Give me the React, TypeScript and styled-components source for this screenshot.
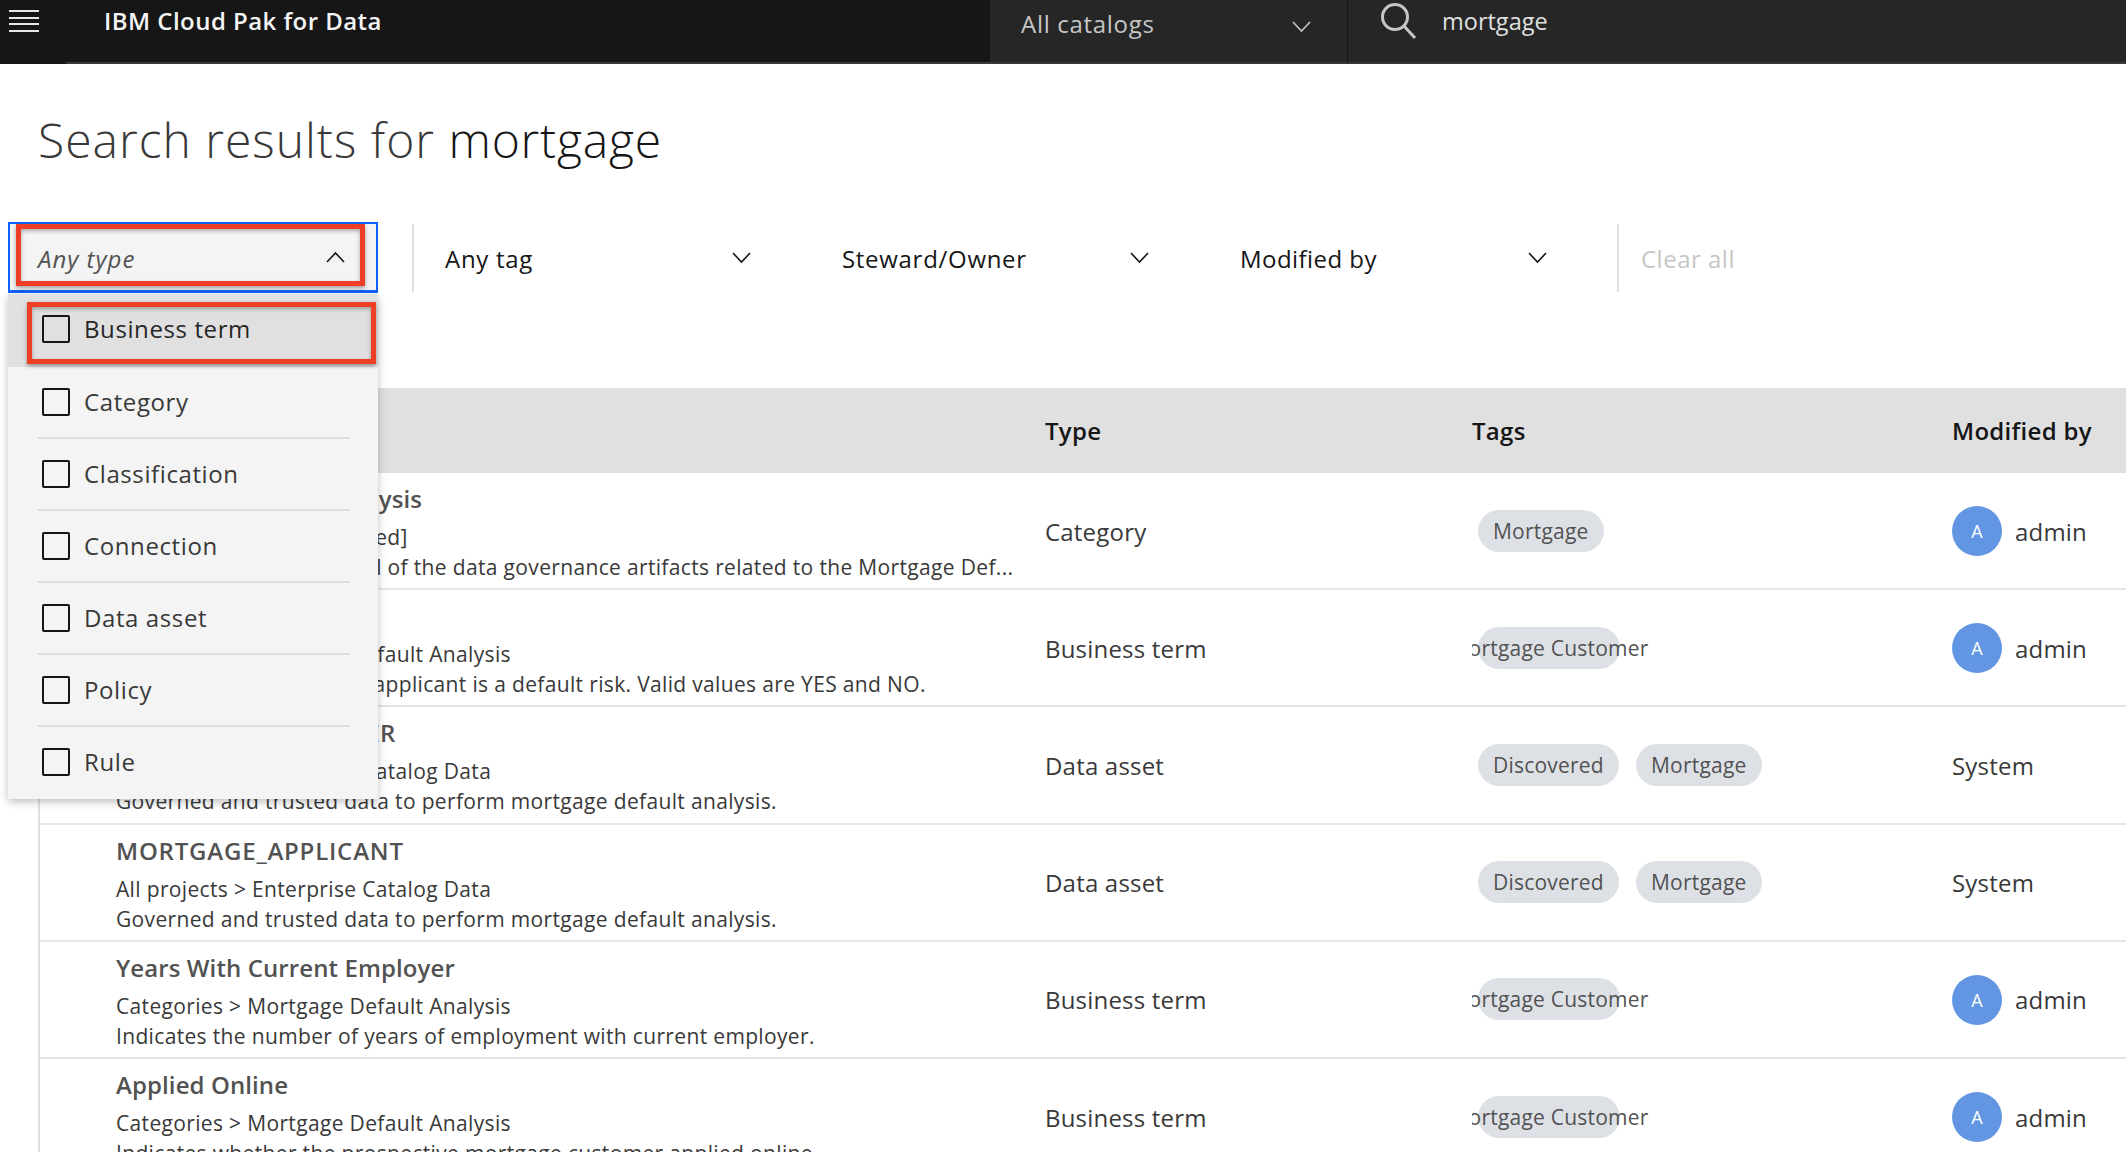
import React from "react";
import styled, { createGlobalStyle } from "styled-components";

const font = `"Open Sans", "Noto Sans", sans-serif`;

const Global = createGlobalStyle`
  html, body { margin: 0; padding: 0; background: #fff; }
  body { width: 2126px; height: 1152px; overflow: hidden; font-family: ${font}; }
  * { box-sizing: border-box; }
`;

const Page = styled.div`
  position: relative;
  width: 2126px;
  height: 1152px;
  overflow: hidden;
`;

const TopBar = styled.header`
  display: flex;
  height: 64px;
  background: #161616;
  color: #fff;
`;

const Burger = styled.div`
  width: 66px;
  padding: 10px 0 0 9px;
  display: flex;
  flex-direction: column;
  gap: 4.5px;
  flex: none;
  span { display: block; width: 30px; height: 2px; background: #e8e8e8; }
`;

const Brand = styled.div`
  width: 924px;
  flex: none;
  height: 64px;
  padding: 4px 0 0 38px;
  font-size: 24px;
  line-height: 34px;
  font-weight: 600;
  letter-spacing: 0.45px;
  color: #f4f4f4;
  border-bottom: 2px solid #393939;
`;

const Catalogs = styled.div`
  width: 358px;
  flex: none;
  display: flex;
  align-items: flex-start;
  justify-content: space-between;
  background: #262626;
  border-right: 1px solid #161616;
  border-bottom: 2px solid #393939;
  padding: 7px 36px 0 31px;
  font-size: 24px;
  line-height: 34px;
  letter-spacing: 0.7px;
  color: #c6c6c6;
  svg { margin-top: 14px; }
`;

const SearchBox = styled.div`
  flex: 1;
  display: flex;
  align-items: flex-start;
  gap: 25px;
  background: #262626;
  border-bottom: 2px solid #393939;
  padding: 2px 0 0 32px;
  font-size: 23.5px;
  line-height: 36px;
  color: #e0e0e0;
  span { margin-top: 1px; }
`;

const Title = styled.h1`
  margin: 0;
  padding: 43px 0 0 38px;
  height: 158px;
  font-size: 48px;
  line-height: 66px;
  font-weight: 300;
  letter-spacing: 1px;
  color: #393939;
  b { font-weight: 350; color: #161616; letter-spacing: 0.8px; }
`;

const FilterBar = styled.div`
  display: flex;
  align-items: center;
  height: 71px;
  padding-left: 8px;
  font-size: 24px;
  letter-spacing: 0.7px;
`;

const ActiveFilter = styled.div`
  width: 370px;
  height: 71px;
  flex: none;
  display: flex;
  align-items: center;
  justify-content: space-between;
  padding: 2px 31px 0 28px;
  background: #f4f4f4;
  border: 2px solid #0f62fe;
  border-bottom-width: 3px;
  font-style: italic;
  letter-spacing: 1px;
  color: #525252;
  svg { margin-top: -2px; }
`;

const Divider = styled.div<{ $gap: number }>`
  width: 2px;
  height: 68px;
  flex: none;
  background: #e0e0e0;
  margin-left: ${(p) => p.$gap}px;
`;

const Filter = styled.div<{ $first?: boolean }>`
  width: ${(p) => (p.$first ? 397 : 398)}px;
  flex: none;
  display: flex;
  align-items: center;
  margin-left: ${(p) => (p.$first ? 31 : 0)}px;
  padding-top: 1px;
  font-weight: 500;
  color: #161616;
  span { width: ${(p) => (p.$first ? 287 : 288)}px; }
`;

const LastFilter = styled(Filter)`
  width: 377px;
  letter-spacing: 0.45px;
`;

const ClearAll = styled.div`
  margin-left: 22px;
  padding-top: 1px;
  letter-spacing: 0.5px;
  color: #c6c6c6;
`;

const Table = styled.div`
  margin: 95px 0 0 38px;
  border-left: 2px solid #e0e0e0;
`;

const HeadRow = styled.div`
  display: grid;
  grid-template-columns: 1005px 427px 480px 1fr;
  align-items: center;
  height: 85px;
  background: #e0e0e0;
  font-size: 24px;
  letter-spacing: 0.3px;
  font-weight: 600;
  color: #161616;
`;

const Row = styled.div`
  display: grid;
  grid-template-columns: 1005px 427px 480px 1fr;
  align-items: center;
  height: 117.2px;
  border-bottom: 2px solid #e6e6e6;
  padding-top: 1px;
  font-size: 24px;
  letter-spacing: 0.2px;
  color: #393939;
`;

const NameCell = styled.div`
  padding: 4px 0 0 76px;
  white-space: nowrap;
  overflow: hidden;
  letter-spacing: 0;
`;

const RowTitle = styled.div<{ $spacing: number }>`
  font-size: 24px;
  line-height: 30px;
  font-weight: 600;
  color: #525252;
  margin-bottom: 8px;
  letter-spacing: ${(p) => p.$spacing}px;
`;

const RowLine = styled.div`
  font-size: 21px;
  line-height: 30px;
  letter-spacing: 0.34px;
  color: #393939;
`;

const TagCell = styled.div`
  display: flex;
  gap: 17px;
  overflow: hidden;
  padding-left: 6px;
  margin-top: -1px;
  letter-spacing: 0.22px;
`;

const Tag = styled.div<{ $w?: number }>`
  display: flex;
  justify-content: center;
  align-items: center;
  flex: none;
  height: 42px;
  padding: 0 15px;
  border-radius: 21px;
  background: #dde1e6;
  font-size: 21px;
  color: #525252;
  white-space: nowrap;
  width: ${(p) => (p.$w ? `${p.$w}px` : "auto")};
  span { flex: none; }
`;

const User = styled.div`
  display: flex;
  align-items: center;
  gap: 13px;
`;

const Avatar = styled.div`
  width: 50px;
  height: 50px;
  border-radius: 50%;
  background: #6296e3;
  color: #fff;
  font-size: 18px;
  display: flex;
  align-items: center;
  justify-content: center;
`;

const Menu = styled.div`
  position: absolute;
  left: 8px;
  top: 294px;
  width: 370px;
  background: #f4f4f4;
  box-shadow: 0 3px 8px rgba(0, 0, 0, 0.25);
`;

const MenuItem = styled.div<{ $hot?: boolean }>`
  height: ${(p) => (p.$hot ? 73 : 72)}px;
  padding: 0 28px 0 30px;
  background: ${(p) => (p.$hot ? "#e0e0e0" : "transparent")};
`;

const MenuInner = styled.div<{ $hot?: boolean; $last?: boolean }>`
  height: 72px;
  display: flex;
  align-items: center;
  gap: 14px;
  padding-left: 4px;
  border-bottom: 2px solid ${(p) => (p.$hot || p.$last ? "transparent" : "#e0e0e0")};
  font-size: 24px;
  letter-spacing: 0.6px;
  color: ${(p) => (p.$hot ? "#262626" : "#393939")};
`;

const MenuLabel = styled.span`
  margin-top: -2px;
`;

const Check = styled.div`
  width: 28px;
  height: 28px;
  flex: none;
  border: 2.5px solid #161616;
  border-radius: 2px;
`;

const Callout = styled.div<{ $x: number; $y: number; $w: number; $h: number }>`
  position: absolute;
  left: ${(p) => p.$x}px;
  top: ${(p) => p.$y}px;
  width: ${(p) => p.$w}px;
  height: ${(p) => p.$h}px;
  border: 5px solid #ee3e25;
  box-shadow: 0 2px 4px rgba(0, 0, 0, 0.35), inset 0 2px 4px rgba(0, 0, 0, 0.3);
  pointer-events: none;
`;

const Chevron = ({ up, color = "#161616" }: { up?: boolean; color?: string }) => (
  <svg width={19} height={12} viewBox="0 0 19 12" fill="none" aria-hidden>
    <path d={up ? "M1 11 L9.5 2 L18 11" : "M1 1 L9.5 10 L18 1"} stroke={color} strokeWidth="1.6" />
  </svg>
);

const SearchGlyph = () => (
  <svg width="37" height="38" viewBox="0 0 37 38" fill="none" aria-hidden>
    <circle cx="15" cy="15" r="12.5" stroke="#c6c6c6" strokeWidth="3" />
    <path d="M24 24 L35 36" stroke="#c6c6c6" strokeWidth="3" />
  </svg>
);

type RowData = {
  title: string;
  spacing: number;
  sub: string;
  desc: string;
  type: string;
  tags: { label: string; w?: number }[];
  admin: boolean;
};

const rows: RowData[] = [
  {
    title: "Mortgage Default Analysis",
    spacing: 0.1,
    sub: "Categories > [Uncategorized]",
    desc: "This category organizes all of the data governance artifacts related to the Mortgage Def...",
    type: "Category",
    tags: [{ label: "Mortgage" }],
    admin: true,
  },
  {
    title: "Default",
    spacing: 0.1,
    sub: "Categories > Mortgage Default Analysis",
    desc: "Indicates if the mortgage applicant is a default risk. Valid values are YES and NO.",
    type: "Business term",
    tags: [{ label: "Mortgage Customer", w: 142 }],
    admin: true,
  },
  {
    title: "MORTGAGE_CUSTOMER",
    spacing: 0.35,
    sub: "All projects > Enterprise Catalog Data",
    desc: "Governed and trusted data to perform mortgage default analysis.",
    type: "Data asset",
    tags: [{ label: "Discovered" }, { label: "Mortgage" }],
    admin: false,
  },
  {
    title: "MORTGAGE_APPLICANT",
    spacing: 0.8,
    sub: "All projects > Enterprise Catalog Data",
    desc: "Governed and trusted data to perform mortgage default analysis.",
    type: "Data asset",
    tags: [{ label: "Discovered" }, { label: "Mortgage" }],
    admin: false,
  },
  {
    title: "Years With Current Employer",
    spacing: 0.1,
    sub: "Categories > Mortgage Default Analysis",
    desc: "Indicates the number of years of employment with current employer.",
    type: "Business term",
    tags: [{ label: "Mortgage Customer", w: 142 }],
    admin: true,
  },
  {
    title: "Applied Online",
    spacing: 0.1,
    sub: "Categories > Mortgage Default Analysis",
    desc: "Indicates whether the prospective mortgage customer applied online.",
    type: "Business term",
    tags: [{ label: "Mortgage Customer", w: 142 }],
    admin: true,
  },
];

const menuItems = ["Business term", "Category", "Classification", "Connection", "Data asset", "Policy", "Rule"];

export default function App() {
  return (
    <Page>
      <Global />
      <TopBar>
        <Burger>
          <span />
          <span />
          <span />
          <span />
        </Burger>
        <Brand>IBM Cloud Pak for Data</Brand>
        <Catalogs>
          All catalogs
          <Chevron color="#c6c6c6" />
        </Catalogs>
        <SearchBox>
          <SearchGlyph />
          <span>mortgage</span>
        </SearchBox>
      </TopBar>
      <Title>
        Search results for <b>mortgage</b>
      </Title>
      <FilterBar>
        <ActiveFilter>
          Any type
          <Chevron up />
        </ActiveFilter>
        <Divider $gap={34} />
        <Filter $first>
          <span>Any tag</span>
          <Chevron />
        </Filter>
        <Filter>
          <span>Steward/Owner</span>
          <Chevron />
        </Filter>
        <LastFilter>
          <span>Modified by</span>
          <Chevron />
        </LastFilter>
        <Divider $gap={0} />
        <ClearAll>Clear all</ClearAll>
      </FilterBar>
      <Table>
        <HeadRow>
          <div />
          <div>Type</div>
          <div>Tags</div>
          <div>Modified by</div>
        </HeadRow>
        {rows.map((r) => (
          <Row key={r.title}>
            <NameCell>
              <RowTitle $spacing={r.spacing}>{r.title}</RowTitle>
              <RowLine>{r.sub}</RowLine>
              <RowLine>{r.desc}</RowLine>
            </NameCell>
            <div>{r.type}</div>
            <TagCell>
              {r.tags.map((t) => (
                <Tag key={t.label} $w={t.w}>
                  <span>{t.label}</span>
                </Tag>
              ))}
            </TagCell>
            {r.admin ? (
              <User>
                <Avatar>A</Avatar>
                admin
              </User>
            ) : (
              <div>System</div>
            )}
          </Row>
        ))}
      </Table>
      <Menu>
        {menuItems.map((m, i) => (
          <MenuItem key={m} $hot={i === 0}>
            <MenuInner $hot={i === 0} $last={i === menuItems.length - 1}>
              <Check />
              <MenuLabel>{m}</MenuLabel>
            </MenuInner>
          </MenuItem>
        ))}
      </Menu>
      <Callout $x={16} $y={224} $w={349} $h={62} />
      <Callout $x={27} $y={302} $w={349} $h={62} />
    </Page>
  );
}
